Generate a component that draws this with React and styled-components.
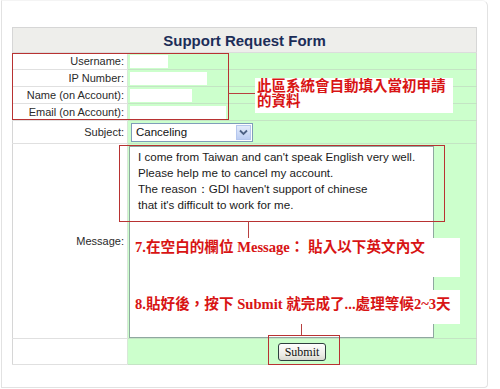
import React from 'react';
import styled, { createGlobalStyle } from 'styled-components';

const GlobalStyle = createGlobalStyle`
  html, body {
    margin: 0;
    padding: 0;
    background: #ffffff;
  }
`;

const Page = styled.div`
  position: relative;
  width: 500px;
  height: 389px;
  overflow: hidden;
  font-family: "Liberation Sans", Arial, sans-serif;
`;

const Frame = styled.div`
  box-sizing: border-box;
  margin-left: 1px;
  width: 487px;
  height: 388px;
  border: 1px solid #e2e2e2;
  border-top-color: #f4f4f4;
  border-radius: 0 6px 4px 0;
  padding: 26px 0 0 10px;
`;

const FormTable = styled.table`
  width: 465px;
  border-collapse: collapse;
  border: 1px solid #d6d6d6;
  table-layout: fixed;
`;

const Col = styled.col`
  width: ${p => (p.$w ? `${p.$w}px` : 'auto')};
`;

const HeaderCell = styled.th`
  height: 24px;
  padding: 0;
  background: #eeeeeb;
  color: #1c2d58;
  font-size: 15px;
  font-weight: bold;
  text-align: center;
  vertical-align: middle;
  border-bottom: 1px solid #dcdcdc;
`;

const Row = styled.tr`
  height: ${p => p.$h}px;
`;

const LabelCell = styled.td`
  padding: 0 3px 0 0;
  background: #ffffff;
  color: #2a2a2a;
  font-size: 11px;
  text-align: right;
  vertical-align: middle;
  border-bottom: 1px solid #e0e0e0;
  border-right: 1px solid #d8e8d8;
  white-space: nowrap;
`;

const ValueCell = styled.td`
  padding: ${p => p.$pad || '0 0 0 2px'};
  background: #ccffcc;
  vertical-align: middle;
  text-align: ${p => p.$align || 'left'};
  border-bottom: 1px solid #c4e4c4;
`;

const Filled = styled.div`
  width: ${p => p.$w}px;
  height: 13px;
  background: #ffffff;
`;

const Select = styled.div`
  box-sizing: border-box;
  display: flex;
  align-items: center;
  justify-content: space-between;
  margin-left: 1px;
  width: 122px;
  height: 19px;
  border: 1px solid #7f9db9;
  background: #ffffff;
  font-size: 11.5px;
  color: #111;
  padding-left: 4px;
`;

const SelectButton = styled.div`
  width: 15px;
  height: 15px;
  margin-right: 1px;
  background: linear-gradient(#e4ecfb, #bccdf3);
  border: 1px solid #b5c7ee;
  box-sizing: border-box;
  display: flex;
  align-items: center;
  justify-content: center;
`;

const MessageBox = styled.div`
  box-sizing: border-box;
  width: 305px;
  height: 192px;
  margin-top: 1px;
  background: #ffffff;
  border: 1px solid #8fa8a0;
  padding: 2px 0 0 8px;
  font-size: 11.6px;
  line-height: 16px;
  color: #1a1a1a;
  white-space: nowrap;
`;

const SubmitButton = styled.button`
  box-sizing: border-box;
  width: 48px;
  height: 18px;
  padding: 0;
  border: 1px solid #2f3f3f;
  border-radius: 3px;
  background: linear-gradient(#ffffff, #eaeae4 70%, #d8d8d0);
  font-family: "Liberation Serif", "Times New Roman", serif;
  font-size: 12px;
  color: #111;
`;

const RedBox = styled.div`
  position: absolute;
  box-sizing: border-box;
  border: 1px solid #b83232;
`;

const Line = styled.div`
  position: absolute;
  background: #b84040;
`;

const Note = styled.div`
  position: absolute;
  box-sizing: border-box;
  background: #ffffff;
  color: #d81414;
  font-family: "Liberation Serif", "Noto Sans CJK TC", serif;
  font-weight: bold;
  font-size: ${p => p.$size || 14.6}px;
  line-height: ${p => p.$lh || 16}px;
  white-space: nowrap;
`;

const userRows = [
  { label: 'Username:', w: 38 },
  { label: 'IP Number:', w: 77 },
  { label: 'Name (on Account):', w: 62 },
  { label: 'Email (on Account):', w: 96 },
];

const messageLines = [
  "I come from Taiwan and can't speak English very well.",
  'Please help me to cancel my account.',
  "The reason\uFF1AGDI haven't support of chinese",
  "that it's difficult to work for me.",
];

export default function App() {
  return (
    <Page>
      <GlobalStyle />
      <Frame>
        <FormTable>
          <colgroup>
            <Col $w={115} />
            <Col />
          </colgroup>
          <tbody>
            <tr>
              <HeaderCell colSpan={2}>Support Request Form</HeaderCell>
            </tr>
            {userRows.map(r => (
              <Row key={r.label} $h={17}>
                <LabelCell>{r.label}</LabelCell>
                <ValueCell>
                  <Filled $w={r.w} />
                </ValueCell>
              </Row>
            ))}
            <Row $h={23}>
              <LabelCell>Subject:</LabelCell>
              <ValueCell>
                <Select>
                  Canceling
                  <SelectButton>
                    <svg width="9" height="7" viewBox="0 0 9 7">
                      <path d="M1 1.5 L4.5 5 L8 1.5" fill="none" stroke="#4d6185" strokeWidth="1.8" />
                    </svg>
                  </SelectButton>
                </Select>
              </ValueCell>
            </Row>
            <Row $h={195}>
              <LabelCell>Message:</LabelCell>
              <ValueCell $pad="0 0 0 1px">
                <MessageBox>
                  {messageLines.map(l => (
                    <div key={l}>{l}</div>
                  ))}
                </MessageBox>
              </ValueCell>
            </Row>
            <Row $h={26}>
              <LabelCell />
              <ValueCell $align="center" $pad="0">
                <SubmitButton>Submit</SubmitButton>
              </ValueCell>
            </Row>
          </tbody>
        </FormTable>
      </Frame>

      {/* annotation callouts laid over the form */}
      <RedBox style={{ left: 12, top: 53, width: 217, height: 67 }} />
      <Line style={{ left: 228, top: 93, width: 28, height: 1 }} />
      <Note $size={14.5} $lh={15} style={{ left: 255, top: 78, width: 198, height: 35, padding: '1px 0 0 2px' }}>
        此區系統會自動填入當初申請
        <br />
        的資料
      </Note>

      <RedBox style={{ left: 119, top: 145, width: 326, height: 77 }} />
      <Line style={{ left: 248, top: 221, width: 1, height: 17 }} />
      <Note style={{ left: 133, top: 238, width: 327, height: 39, padding: '1px 0 0 2px' }}>
        7.在空白的欄位 Message： 貼入以下英文內文
      </Note>
      <Note style={{ left: 133, top: 290, width: 327, height: 34, padding: '6px 0 0 2px' }}>
        8.貼好後，按下 Submit 就完成了...處理等候2~3天
      </Note>
      <Line style={{ left: 301, top: 324, width: 1, height: 12 }} />
      <RedBox style={{ left: 268, top: 335, width: 72, height: 30 }} />
    </Page>
  );
}
